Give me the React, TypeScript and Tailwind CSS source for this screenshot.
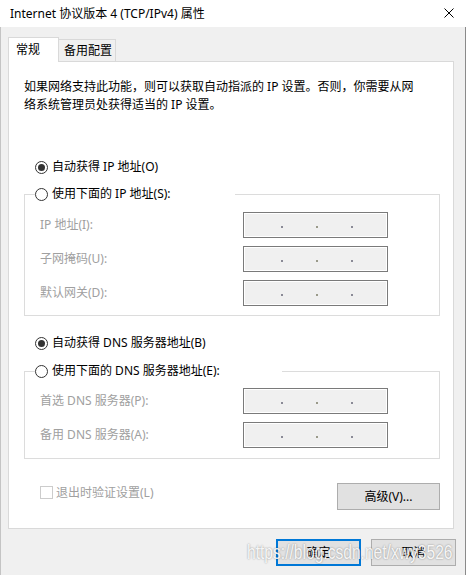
import React from "react";

function RadioMark({ checked }: { checked?: boolean }) {
  return (
    <span className="flex h-[13px] w-[13px] shrink-0 items-center justify-center rounded-full border border-[#333333] bg-white">
      {checked && <span className="h-[7px] w-[7px] rounded-full bg-[#333333]" />}
    </span>
  );
}

function Radio({ checked, label }: { checked?: boolean; label: string }) {
  return (
    <div className="flex h-[20px] items-center gap-[4px] whitespace-nowrap">
      <RadioMark checked={checked} />
      <span>{label}</span>
    </div>
  );
}

// disabled ip address control
function IpBox() {
  return (
    <div className="h-[26px] w-[145px] shrink-0 border border-[#7a7a7a] bg-[#f0f0f0] shadow-[inset_0_0_0_1px_#ffffff]">
      <div className="flex gap-[33px] pl-[37px] pt-[13px]">
        <span className="h-[2px] w-[2px] bg-[#8a8a96]" />
        <span className="h-[2px] w-[2px] bg-[#9a9a8a]" />
        <span className="h-[2px] w-[2px] bg-[#8a8a96]" />
      </div>
    </div>
  );
}

function FieldRow({ label }: { label: string }) {
  return (
    <div className="flex items-center pl-[5px]">
      <span className="w-[203px] shrink-0 whitespace-nowrap text-[#a0a0a0]">{label}</span>
      <IpBox />
    </div>
  );
}

function Group({
  legend,
  legendWidth,
  rows,
  top,
  bottom,
}: {
  legend: string;
  legendWidth: string;
  rows: string[];
  top: string;
  bottom: string;
}) {
  return (
    <fieldset className={`border border-[#dcdcdc] pl-[10px] ${bottom}`}>
      <legend className={legendWidth}>
        <Radio label={legend} />
      </legend>
      <div className={`flex flex-col gap-[8px] ${top}`}>
        {rows.map((r) => (
          <FieldRow key={r} label={r} />
        ))}
      </div>
    </fieldset>
  );
}

export default function App() {
  return (
    <div className="relative flex h-[575px] w-[466px] flex-col overflow-hidden bg-white text-[12px] leading-[18px] text-black font-['Noto_Sans','Noto_Sans_CJK_SC',sans-serif]">
      {/* title bar */}
      <div className="flex h-[27px] shrink-0 justify-between bg-white pl-[10px] pr-[12px]">
        <span className="self-center whitespace-nowrap">Internet 协议版本 4 (TCP/IPv4) 属性</span>
        <svg className="mt-[8px]" width="10" height="10" viewBox="0 0 10 10">
          <path d="M0.5 0.5 L9.5 9.5 M9.5 0.5 L0.5 9.5" stroke="#000" strokeWidth="1" fill="none" />
        </svg>
      </div>

      <div className="flex flex-1 flex-col border-l border-r border-l-[#c4c4c4] border-r-[#8a8a8a] bg-[#f0f0f0] pl-[7px] pr-[11px] pt-[10px]">
        {/* tabs */}
        <div className="flex h-[24px] items-end">
          <div className="relative z-10 -mb-px flex h-[25px] w-[51px] items-center border border-b-0 border-[#d9d9d9] bg-white pb-[1px] pl-[7px]">
            常规
          </div>
          <div className="flex h-[22px] w-[57px] items-center border-r border-t border-[#d9d9d9] pl-[5px]">
            备用配置
          </div>
        </div>

        {/* panel */}
        <div className="flex flex-col border border-[#d9d9d9] bg-white pb-[18px] pl-[15px] pr-[13px] pt-[16px]">
          <p className="whitespace-nowrap">
            <span className="block">如果网络支持此功能，则可以获取自动指派的 IP 设置。否则，你需要从网</span>
            <span className="block">络系统管理员处获得适当的 IP 设置。</span>
          </p>

          <div className="mt-[43px] pl-[11px]">
            <Radio checked label="自动获得 IP 地址(O)" />
          </div>

          <div className="mt-[7px]">
            <Group
              legend="使用下面的 IP 地址(S):"
              legendWidth="w-[200px]"
              rows={["IP 地址(I):", "子网掩码(U):", "默认网关(D):"]}
              top="mt-[8px]"
              bottom="pb-[9px]"
            />
          </div>

          <div className="mt-[17px] pl-[11px]">
            <Radio checked label="自动获得 DNS 服务器地址(B)" />
          </div>

          <div className="mt-[8px]">
            <Group
              legend="使用下面的 DNS 服务器地址(E):"
              legendWidth="w-[247px]"
              rows={["首选 DNS 服务器(P):", "备用 DNS 服务器(A):"]}
              top="mt-[7px]"
              bottom="pb-[10px]"
            />
          </div>

          <div className="mt-[24px] flex items-start justify-between">
            <label className="ml-[16px] mt-[3px] flex items-center gap-[3px] whitespace-nowrap text-[#a0a0a0]">
              <span className="h-[13px] w-[13px] border border-[#cccccc] bg-white" />
              <span className="leading-[13px]">退出时验证设置(L)</span>
            </label>
            <button className="h-[27px] w-[103px] border border-[#adadad] bg-[#e1e1e1] text-black">
              高级(V)...
            </button>
          </div>
        </div>

        {/* dialog buttons */}
        <div className="-mr-[2px] mt-[10px] flex justify-end gap-[10px]">
          <button className="h-[27px] w-[85px] border-2 border-[#0078d7] bg-[#e1e1e1] text-black">确定</button>
          <button className="h-[27px] w-[85px] border border-[#adadad] bg-[#e1e1e1] text-black">取消</button>
        </div>
      </div>

      {/* watermark */}
      <div className="pointer-events-none absolute left-[247px] top-[540px] origin-left scale-x-[0.78] whitespace-nowrap text-[20px] leading-[24px] text-white/90 font-['Liberation_Sans',sans-serif] [text-shadow:0_0_2px_rgba(0,0,0,0.45)]">
        https://blog.csdn.net/xwy3526
      </div>
    </div>
  );
}
